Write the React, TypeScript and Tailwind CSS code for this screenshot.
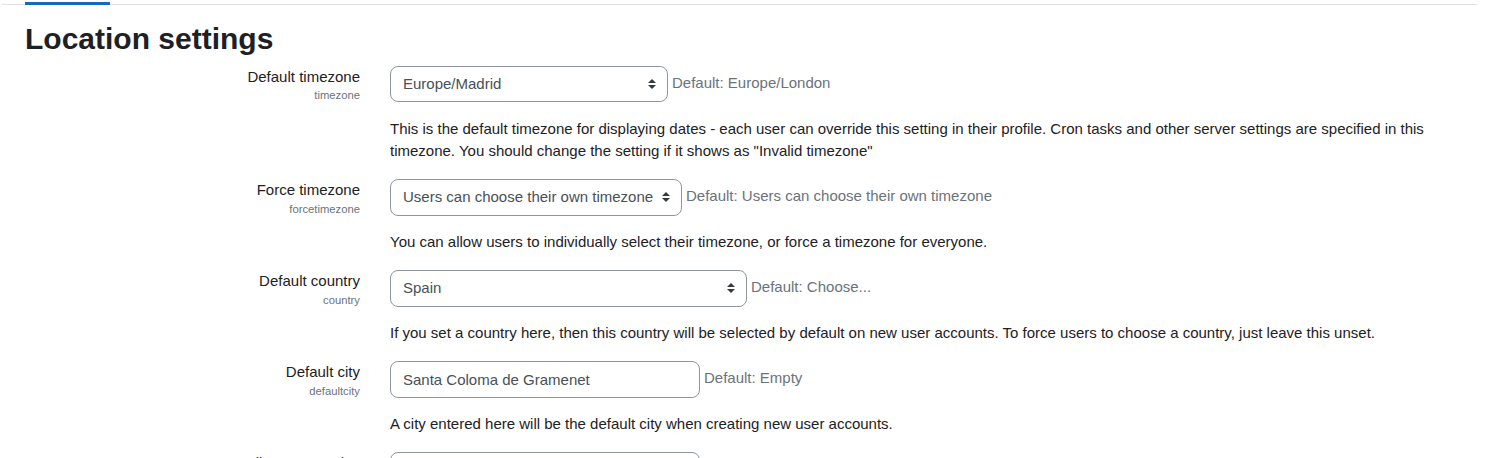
import React from "react";

const Arrow = () => (
  <svg
    width="8"
    height="10"
    viewBox="0 0 4 5"
    className="pointer-events-none absolute right-[12px] top-1/2 -translate-y-1/2"
  >
    <path fill="#343a40" d="M2 0L0 2h4zm0 5L0 3h4z" />
  </svg>
);

function SelectBox({ value, className }: { value: string; className: string }) {
  return (
    <span className="relative inline-block shrink-0">
      <select
        defaultValue={value}
        className={
          "block h-[36.5px] appearance-none rounded-lg border border-[#8f959e] bg-white pl-[12px] pr-[28px] text-[15px] leading-[22.5px] text-[#495057] outline-none " +
          className
        }
      >
        <option value={value}>{value}</option>
      </select>
      <Arrow />
    </span>
  );
}

function TextBox({ value, className }: { value: string; className: string }) {
  return (
    <input
      type="text"
      defaultValue={value}
      className={
        "block h-[36.5px] shrink-0 rounded-lg border border-[#8f959e] bg-white px-[12px] text-[15px] leading-[22.5px] text-[#495057] outline-none " +
        className
      }
    />
  );
}

function Row({
  label,
  name,
  control,
  def,
  desc,
}: {
  label: string;
  name: string;
  control: React.ReactNode;
  def: string;
  desc: React.ReactNode;
}) {
  return (
    <div className="flex">
      <div className="w-[335px] shrink-0 text-right">
        <label className="block text-[15px] leading-[22.5px] text-[#1d2125]">{label}</label>
        <div className="text-[11.25px] leading-[14px] text-[#6a737b]">{name}</div>
      </div>
      <div className="ml-[30px] min-w-0 flex-1 pb-[16.5px]">
        <div className="flex items-center gap-[4px]">
          {control}
          <span className="mb-[2px] text-[15px] leading-[22.5px] text-[#6a737b]">{def}</span>
        </div>
        <div className="mt-[15.5px] text-[15px] leading-[22.5px] text-[#1d2125]">{desc}</div>
      </div>
    </div>
  );
}

export default function App() {
  return (
    <div className="min-h-screen bg-white pr-[14px] font-['Liberation_Sans',Arial,sans-serif] text-[#1d2125]">
      <div className="ml-[2px] flex h-[5px] border-b border-[#dee2e6]">
        <div className="ml-[23px] mt-[2px] h-[3px] w-[85px] bg-[#0f6cbf]" />
      </div>
      <div className="pl-[25px]">
        <h2 className="mb-[8.5px] mt-[16px] text-[30px] font-bold leading-[36px] text-[#1d2125]">
          Location settings
        </h2>
        <Row
          label="Default timezone"
          name="timezone"
          control={<SelectBox value="Europe/Madrid" className="w-[278px]" />}
          def="Default: Europe/London"
          desc={
            <>
              This is the default timezone for displaying dates - each user can override this setting in
              their profile. Cron tasks and other server settings are specified in this timezone. You should
              change the setting if it shows as "Invalid timezone"
            </>
          }
        />
        <Row
          label="Force timezone"
          name="forcetimezone"
          control={<SelectBox value="Users can choose their own timezone" className="w-[292px]" />}
          def="Default: Users can choose their own timezone"
          desc="You can allow users to individually select their timezone, or force a timezone for everyone."
        />
        <Row
          label="Default country"
          name="country"
          control={<SelectBox value="Spain" className="w-[357px]" />}
          def="Default: Choose..."
          desc="If you set a country here, then this country will be selected by default on new user accounts. To force users to choose a country, just leave this unset."
        />
        <Row
          label="Default city"
          name="defaultcity"
          control={<TextBox value="Santa Coloma de Gramenet" className="w-[310px]" />}
          def="Default: Empty"
          desc="A city entered here will be the default city when creating new user accounts."
        />
        <Row
          label="All country codes"
          name="allcountrycodes"
          control={<TextBox value="" className="w-[310px]" />}
          def="Default: Empty"
          desc="This is the list of countries that may be selected in various places, for example in a user's profile. If blank (the default) the list in countries.php in the standard English language pack is used. That is the list from ISO 3166-1. Otherwise, you can specify a comma-separated list, for example: GB,FR,ES."
        />
      </div>
    </div>
  );
}
